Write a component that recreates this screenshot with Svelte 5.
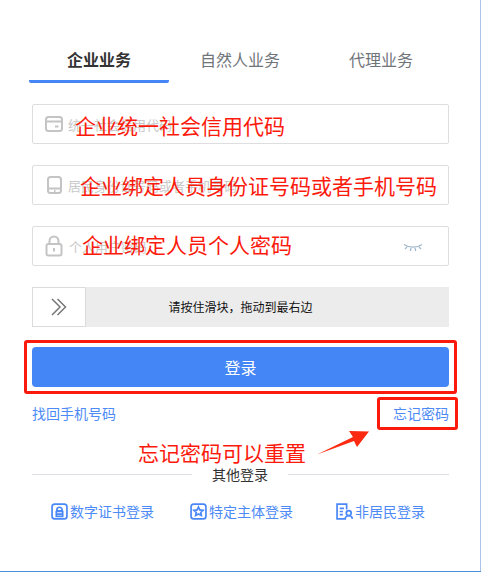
<script>
  const tabs = [
    { label: '企业业务', active: true },
    { label: '自然人业务', active: false },
    { label: '代理业务', active: false }
  ];
</script>

<div class="page">
  <main class="panel">
    <nav class="tabs">
      {#each tabs as tab}
        <div class="tab" class:active={tab.active}>{tab.label}</div>
      {/each}
    </nav>

    <div class="field">
      <svg class="ico" viewBox="0 0 18 18" width="18" height="18" fill="none" stroke="#c4c4c4" stroke-width="2">
        <rect x="1" y="2" width="16" height="14" rx="2.5" />
        <path d="M1 6.5h16M10 11.5h3.5" />
      </svg>
      <span class="ph">统一社会信用代码</span>
    </div>

    <div class="field">
      <svg class="ico" viewBox="0 0 18 18" width="18" height="18" fill="none" stroke="#c4c4c4" stroke-width="2">
        <rect x="3" y="1" width="13" height="16" rx="2.5" />
        <path d="M3 12.5h13M9 15h1.5" />
      </svg>
      <span class="ph">居民身份证号码或者手机号码</span>
    </div>

    <div class="field">
      <svg class="ico lock" viewBox="0 0 18 22" width="18" height="22" fill="none" stroke="#c4c4c4" stroke-width="2">
        <path d="M4.5 9V6a4.5 4.5 0 0 1 9 0v3" />
        <rect x="1.5" y="9" width="15" height="11.5" rx="2" />
        <path d="M9 13v3.5" />
      </svg>
      <span class="ph">个人用户密码</span>
      <svg class="eye" viewBox="0 0 20 10" width="20" height="10" fill="none" stroke="#a3b8cb" stroke-width="1.3">
        <path d="M1 1.5C6 5 14 5 19 1.5M4 4l-2 2M8 5l-.7 3M12 5l.7 3M16 4l2 2" />
      </svg>
    </div>

    <div class="slider">
      <div class="handle">
        <svg viewBox="0 0 16 18" width="16" height="18" fill="none" stroke="#777" stroke-width="1.5">
          <path d="M1 1l8 8-8 8M6.5 1l8 8-8 8" />
        </svg>
      </div>
      <div class="track">请按住滑块，拖动到最右边</div>
    </div>

    <button class="submit">登录</button>

    <div class="links">
      <span>找回手机号码</span>
      <span>忘记密码</span>
    </div>

    <div class="divider"><span>其他登录</span></div>

    <div class="others">
      <span class="other">
        <svg viewBox="0 0 16 16" width="17" height="17" fill="none" stroke="#4a88f7" stroke-width="1.6">
          <rect x="1" y="1" width="14" height="14" rx="2.5" />
          <path d="M5.5 6.5a2.5 2.5 0 0 1 5 0v1h-5zM5 8h6v4.5H5zM5 10.5h6" />
        </svg>
        数字证书登录
      </span>
      <span class="other">
        <svg viewBox="0 0 16 16" width="17" height="17" fill="none" stroke="#4a88f7" stroke-width="1.6">
          <rect x="1" y="1" width="14" height="14" rx="2.5" />
          <path d="M8 3.8l1.3 2.7 3 .4-2.2 2 .6 2.9L8 10.4l-2.7 1.4.6-2.9-2.2-2 3-.4z" />
        </svg>
        特定主体登录
      </span>
      <span class="other">
        <svg viewBox="0 0 16 16" width="17" height="17" fill="none" stroke="#4a88f7" stroke-width="1.6">
          <path d="M9.5 15H1V1h9v5M3.5 5h4M3.5 8h3M3.5 11h3" />
          <circle cx="12" cy="9.5" r="2.3" />
          <path d="M8.5 15c.3-2 1.7-3 3.5-3s3.2 1 3.5 3" />
        </svg>
        非居民登录
      </span>
    </div>
  </main>

  <!-- red annotations drawn over the form -->
  <span class="note n1">企业统一社会信用代码</span>
  <span class="note n2">企业绑定人员身份证号码或者手机号码</span>
  <span class="note n3">企业绑定人员个人密码</span>
  <span class="note n4">忘记密码可以重置</span>
  <div class="box b1"></div>
  <div class="box b2"></div>
  <svg class="arrow" viewBox="0 0 56 26" width="56" height="26">
    <path d="M1 24.5L37 7 33 1 53 1.5 41 17 38 11z" fill="#fb2a10" />
  </svg>
  <div class="edge-right"></div>
  <div class="edge-bottom"></div>
</div>

<style>
  :global(body) {
    margin: 0;
    background: #fff;
  }
  .page {
    position: relative;
    width: 481px;
    height: 572px;
    overflow: hidden;
    background: #fff;
    font-family: "Microsoft YaHei", "Noto Sans CJK SC", "Liberation Sans", sans-serif;
  }
  .panel {
    display: flex;
    flex-direction: column;
    padding: 39px 32px 0;
    box-sizing: border-box;
    width: 481px;
  }
  .tabs {
    display: flex;
    margin-left: -3px;
    margin-bottom: 21px;
    height: 44px;
  }
  .tab {
    flex: none;
    width: 140px;
    margin-right: 1px;
    height: 44px;
    box-sizing: border-box;
    text-align: center;
    font-size: 16px;
    line-height: 41px;
    color: #6f7479;
  }
  .tab.active {
    color: #333;
    font-weight: 700;
    border-bottom: 3px solid #4486f6;
    border-radius: 0 0 2px 2px;
  }
  .field {
    display: flex;
    align-items: center;
    height: 40px;
    box-sizing: border-box;
    border: 1px solid #dedede;
    border-radius: 2px;
    margin-bottom: 21px;
    padding-left: 12px;
  }
  .ico {
    flex: none;
    margin-right: 5px;
  }
  .lock {
    margin-right: 6px;
  }
  .ph {
    font-size: 13px;
    color: #c9c9c9;
    white-space: nowrap;
  }
  .eye {
    margin-left: auto;
    margin-right: 25px;
    margin-top: 3px;
  }
  .slider {
    display: flex;
    height: 40px;
    margin-bottom: 20px;
    background: #ececec;
  }
  .handle {
    width: 54px;
    box-sizing: border-box;
    background: #fff;
    border: 1px solid #dbdbdb;
    display: flex;
    align-items: center;
    justify-content: center;
  }
  .track {
    flex: 1;
    padding-right: 54px;
    text-align: center;
    font-size: 12px;
    line-height: 40px;
    color: #111;
  }
  .submit {
    height: 40px;
    border: 0;
    border-radius: 4px;
    background: #4486f6;
    color: #fff;
    font-family: inherit;
    font-size: 16px;
    padding: 0;
  }
  .links {
    display: flex;
    justify-content: space-between;
    margin-top: 16px;
    font-size: 14px;
    line-height: 20px;
    color: #4d8af6;
  }
  .divider {
    display: flex;
    align-items: center;
    gap: 20px;
    margin-top: 41px;
    height: 20px;
    font-size: 14px;
    color: #333;
    white-space: nowrap;
  }
  .divider::before,
  .divider::after {
    content: "";
    height: 1px;
    background: #dcdfe6;
  }
  .divider::before {
    width: 160px;
  }
  .divider::after {
    flex: 1;
  }
  .others {
    display: flex;
    padding-left: 19px;
    margin-top: 17px;
    font-size: 14px;
    line-height: 20px;
    color: #4d8af6;
  }
  .other {
    display: flex;
    align-items: center;
    gap: 2px;
    margin-right: 36px;
  }
  .other:last-child {
    margin-left: 7px;
    margin-right: 0;
  }
  .note {
    position: absolute;
    font-size: 21px;
    line-height: 24px;
    color: #fb1a0c;
    white-space: nowrap;
  }
  .n1 { left: 75px; top: 113px; }
  .n2 { left: 80px; top: 173px; }
  .n3 { left: 82px; top: 232px; }
  .n4 { left: 138px; top: 440px; }
  .box {
    position: absolute;
    box-sizing: border-box;
    border: 3px solid #fb1a0c;
    border-radius: 3px;
  }
  .b1 { left: 24px; top: 340px; width: 433px; height: 54px; }
  .b2 { left: 377px; top: 397px; width: 81px; height: 33px; }
  .arrow {
    position: absolute;
    left: 316px;
    top: 430px;
  }
  .edge-right {
    position: absolute;
    right: 0;
    top: 0;
    bottom: 0;
    width: 1px;
    background: #a9c4e8;
  }
  .edge-bottom {
    position: absolute;
    left: 0;
    right: 0;
    bottom: 0;
    height: 1px;
    background: #4a90dc;
  }
</style>
